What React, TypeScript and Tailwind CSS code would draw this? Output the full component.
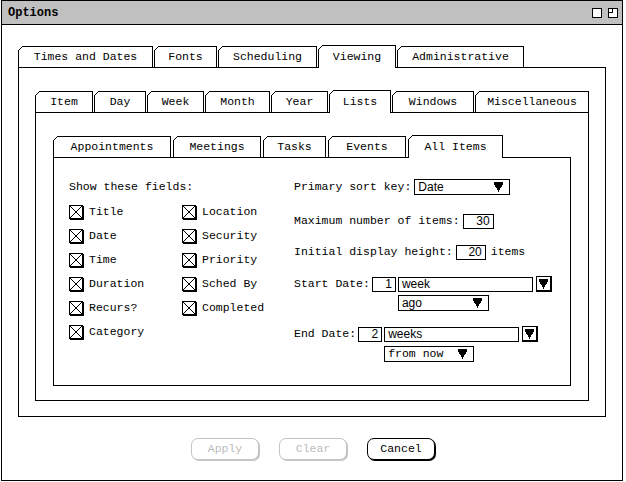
import React from "react";

const mono = "font-['Liberation_Mono',monospace] text-[11.5px] leading-none text-black";
const sans = "font-['Liberation_Sans',sans-serif] text-[12px] leading-none text-black";

type TabDef = { label: string; w: string };

const mainTabs: TabDef[] = [
  { label: "Times and Dates", w: "w-[135px]" },
  { label: "Fonts", w: "w-[63px]" },
  { label: "Scheduling", w: "w-[99px]" },
  { label: "Viewing", w: "w-[78px]" },
  { label: "Administrative", w: "w-[127px]" },
];

const viewTabs: TabDef[] = [
  { label: "Item", w: "w-[58px]" },
  { label: "Day", w: "w-[52px]" },
  { label: "Week", w: "w-[57px]" },
  { label: "Month", w: "w-[65px]" },
  { label: "Year", w: "w-[57px]" },
  { label: "Lists", w: "w-[62px]" },
  { label: "Windows", w: "w-[82px]" },
  { label: "Miscellaneous", w: "w-[114px]" },
];

const listTabs: TabDef[] = [
  { label: "Appointments", w: "w-[118px]" },
  { label: "Meetings", w: "w-[88px]" },
  { label: "Tasks", w: "w-[63px]" },
  { label: "Events", w: "w-[78px]" },
  { label: "All Items", w: "w-[95px]" },
];

// Tab with the clipped top-left corner
const Tab = ({ tab, selected }: { tab: TabDef; selected: boolean }) => (
  <div
    className={`relative flex items-center justify-center border-l border-t border-r border-black bg-white ${tab.w} ${
      selected ? "z-10 -mb-px h-[23px] pb-[1px]" : "h-[21px]"
    }`}
  >
    <svg
      className="absolute -left-px -top-px"
      width="5"
      height="5"
      viewBox="0 0 5 5"
      shapeRendering="crispEdges"
    >
      <polygon points="0,0 5,0 0,5" fill="white" />
      <line x1="0" y1="5" x2="5" y2="0" stroke="black" strokeWidth="1" />
    </svg>
    <span className={mono}>{tab.label}</span>
  </div>
);

const TabGroup = ({
  tabs,
  selected,
  gap,
  panel,
  children,
}: {
  tabs: TabDef[];
  selected: number;
  gap: string;
  panel: string;
  children?: React.ReactNode;
}) => (
  <div className="flex flex-col">
    <div className={`flex h-[22px] items-end ${gap}`}>
      {tabs.map((t, i) => (
        <Tab key={t.label} tab={t} selected={i === selected} />
      ))}
    </div>
    <div className={`border border-black bg-white ${panel}`}>{children}</div>
  </div>
);

const Checkbox = () => (
  <svg width="15" height="15" viewBox="0 0 15 15" shapeRendering="crispEdges">
    <rect x="0.5" y="0.5" width="13" height="13" fill="white" stroke="black" />
    <rect x="14" y="1" width="1" height="14" fill="black" />
    <rect x="1" y="14" width="14" height="1" fill="black" />
    <line x1="1" y1="1" x2="13" y2="13" stroke="black" />
    <line x1="13" y1="1" x2="1" y2="13" stroke="black" />
  </svg>
);

const Arrow = () => (
  <svg width="9" height="10" viewBox="0 0 9 10" shapeRendering="crispEdges">
    <rect x="0" y="0" width="9" height="2" fill="black" />
    <polygon points="0,2 9,2 4.5,10" fill="black" />
  </svg>
);

const Select = ({ value, w, font = sans }: { value: string; w: string; font?: string }) => (
  <div className={`flex h-[16px] items-center justify-between border border-black bg-white pl-[3px] pr-[6px] ${w}`}>
    <span className={font}>{value}</span>
    <Arrow />
  </div>
);

const NumBox = ({ value, w }: { value: string; w: string }) => (
  <div className={`flex h-[15px] items-center justify-end border border-black bg-white pr-[3px] ${w}`}>
    <span className={sans}>{value}</span>
  </div>
);

const Field = ({ value }: { value: string }) => (
  <div className="flex h-[15px] w-[135px] items-center border border-black bg-white pl-[3px]">
    <span className={sans}>{value}</span>
  </div>
);

const DropBtn = () => (
  <div className="flex h-[16px] w-[16px] items-center justify-center border-t border-l border-r-2 border-b-2 border-black bg-white">
    <Arrow />
  </div>
);

const CheckRow = ({ label }: { label: string }) => (
  <div className="flex h-[24px] items-center gap-[5px]">
    <Checkbox />
    <span className={mono}>{label}</span>
  </div>
);

const Button = ({ label, disabled }: { label: string; disabled?: boolean }) => (
  <div
    className={`flex h-[22px] w-[68px] items-center justify-center rounded-[7px] border bg-white ${
      disabled
        ? "border-[#c4c4c4] shadow-[1px_1px_0_0_#c4c4c4]"
        : "border-black shadow-[1px_1px_0_0_#000]"
    }`}
  >
    <span className={`font-['Liberation_Mono',monospace] text-[11.5px] leading-none ${disabled ? "text-[#bcbcbc]" : "text-black"}`}>
      {label}
    </span>
  </div>
);

export default function App() {
  return (
    <div className="h-[482px] w-[626px] overflow-hidden bg-white">
      <div className="ml-px flex h-[481px] w-[622px] flex-col border border-black">
        {/* Title bar */}
        <div className="flex h-[24px] items-center justify-between border-b border-black bg-[#c0c0c0] pl-[6px] pr-[4px]">
          <span className="font-['Liberation_Mono',monospace] text-[12px] font-bold leading-none text-black">
            Options
          </span>
          <div className="flex gap-[6px]">
            <div className="h-[10px] w-[10px] border border-black bg-white" />
            <div className="h-[10px] w-[10px] border border-black bg-white">
              <div className="h-[4px] w-[4px] border-r border-b border-black" />
            </div>
          </div>
        </div>

        <div className="pl-[16px] pt-[20px]">
          <TabGroup tabs={mainTabs} selected={3} gap="gap-px" panel="h-[350px] w-[588px] pl-[16px] pt-[22px]">
            <TabGroup tabs={viewTabs} selected={5} gap="gap-px" panel="h-[289px] w-[554px] pl-[17px] pt-[22px]">
              <TabGroup tabs={listTabs} selected={4} gap="gap-[2px]" panel="h-[229px] w-[518px] flex">
                {/* Field checkboxes */}
                <div className="w-[240px] pl-[15px] pt-[22px]">
                  <div className="flex h-[14px] items-center">
                    <span className={mono}>Show these fields:</span>
                  </div>
                  <div className="mt-[6px] flex">
                    <div className="w-[113px]">
                      {["Title", "Date", "Time", "Duration", "Recurs?", "Category"].map((l) => (
                        <CheckRow key={l} label={l} />
                      ))}
                    </div>
                    <div>
                      {["Location", "Security", "Priority", "Sched By", "Completed"].map((l) => (
                        <CheckRow key={l} label={l} />
                      ))}
                    </div>
                  </div>
                </div>

                {/* Sorting and range */}
                <div className="flex flex-col pt-[21px]">
                  <div className="flex h-[16px] items-center gap-[3px]">
                    <span className={mono}>Primary sort key:</span>
                    <Select value="Date" w="w-[96px]" />
                  </div>
                  <div className="mt-[18px] flex h-[16px] items-center gap-[3px]">
                    <span className={mono}>Maximum number of items:</span>
                    <NumBox value="30" w="w-[31px]" />
                  </div>
                  <div className="mt-[15px] flex h-[16px] items-center gap-[3px]">
                    <span className={mono}>Initial display height:</span>
                    <NumBox value="20" w="w-[30px]" />
                    <span className={`${mono} ml-[2px]`}>items</span>
                  </div>

                  <div className="mt-[16px] flex items-start gap-[2px]">
                    <div className="flex h-[16px] items-center">
                      <span className={mono}>Start Date:</span>
                    </div>
                    <div className="flex h-[16px] items-center">
                      <NumBox value="1" w="w-[24px]" />
                    </div>
                    <div className="flex flex-col">
                      <div className="flex h-[16px] items-center gap-[3px]">
                        <Field value="week" />
                        <DropBtn />
                      </div>
                      <div className="mt-[3px]">
                        <Select value="ago" w="w-[91px]" />
                      </div>
                    </div>
                  </div>

                  <div className="mt-[15px] flex items-start gap-[2px]">
                    <div className="flex h-[16px] items-center">
                      <span className={mono}>End Date:</span>
                    </div>
                    <div className="flex h-[16px] items-center">
                      <NumBox value="2" w="w-[24px]" />
                    </div>
                    <div className="flex flex-col">
                      <div className="flex h-[16px] items-center gap-[3px]">
                        <Field value="weeks" />
                        <DropBtn />
                      </div>
                      <div className="mt-[4px]">
                        <Select value="from now" w="w-[90px]" font={mono} />
                      </div>
                    </div>
                  </div>
                </div>
              </TabGroup>
            </TabGroup>
          </TabGroup>
        </div>

        {/* Dialog buttons */}
        <div className="mt-[21px] flex gap-[20px] pl-[189px]">
          <Button label="Apply" disabled />
          <Button label="Clear" disabled />
          <Button label="Cancel" />
        </div>
      </div>
    </div>
  );
}
